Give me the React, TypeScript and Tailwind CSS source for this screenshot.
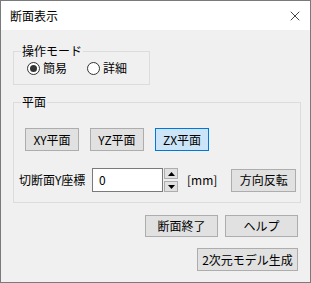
import { X } from "lucide-react";

const font = { fontFamily: '"Noto Sans CJK JP", "Noto Sans", sans-serif' };

function Btn({ label, className = "", active = false }: { label: string; className?: string; active?: boolean }) {
  return (
    <button
      className={
        "flex items-center justify-center border text-[12px] leading-none text-black " +
        (active ? "border-[#0078d7] bg-[#cce4f7] " : "border-[#adadad] bg-[#e1e1e1] ") +
        className
      }
    >
      {label}
    </button>
  );
}

function Radio({ label, checked }: { label: string; checked?: boolean }) {
  return (
    <label className="flex items-center gap-[3px]">
      <span className="flex h-[13px] w-[13px] items-center justify-center rounded-full border border-[#333333] bg-white">
        {checked && <span className="h-[7px] w-[7px] rounded-full bg-[#333333]" />}
      </span>
      <span className="text-[12px] leading-none">{label}</span>
    </label>
  );
}

function Group({ title, className, children }: { title: string; className: string; children: React.ReactNode }) {
  return (
    <div className={"relative border border-[#dcdcdc] " + className}>
      <span className="absolute -top-[9px] left-[7px] bg-[#f0f0f0] px-[1px] text-[12px] leading-[16px]">{title}</span>
      {children}
    </div>
  );
}

export default function App() {
  return (
    <div style={font} className="flex h-[283px] w-[311px] flex-col border border-[#7a7a7a] bg-[#f0f0f0] text-black">
      {/* title bar */}
      <div className="flex h-[29px] items-center justify-between bg-white pl-[9px] pr-[7px]">
        <span className="text-[12px]">断面表示</span>
        <X size={16} strokeWidth={1.1} className="text-black" />
      </div>

      <div className="flex flex-1 flex-col px-[12px] pt-[21px]">
        <Group title="操作モード" className="h-[34px] w-[137px]">
          <div className="flex h-full items-center gap-[20px] pl-[13px]">
            <Radio label="簡易" checked />
            <Radio label="詳細" />
          </div>
        </Group>

        <Group title="平面" className="mt-[17px] h-[101px] w-[288px]">
          <div className="flex flex-col pl-[11px] pt-[25px]">
            <div className="flex gap-[11px]">
              <Btn label="XY平面" className="h-[23px] w-[54px]" />
              <Btn label="YZ平面" className="h-[23px] w-[54px]" />
              <Btn label="ZX平面" className="h-[23px] w-[54px]" active />
            </div>
            <div className="mt-[17px] flex items-center">
              <span className="-ml-[6px] w-[73px] whitespace-nowrap text-[12px]">切断面Y座標</span>
              <div className="flex h-[24px] w-[71px] items-center border border-[#7a7a7a] bg-white pl-[6px] text-[12px]">0</div>
              <div className="ml-[1px] flex h-[24px] flex-col justify-between">
                <div className="flex h-[11px] w-[14px] items-center justify-center border border-[#adadad] bg-[#e1e1e1]">
                  <svg width="7" height="4" viewBox="0 0 7 4"><path d="M3.5 0L7 4H0z" fill="#000" /></svg>
                </div>
                <div className="flex h-[11px] w-[14px] items-center justify-center border border-[#adadad] bg-[#e1e1e1]">
                  <svg width="7" height="4" viewBox="0 0 7 4"><path d="M0 0h7L3.5 4z" fill="#000" /></svg>
                </div>
              </div>
              <span className="ml-[9px] text-[12px]">[mm]</span>
              <Btn label="方向反転" className="ml-[14px] h-[23px] w-[65px]" />
            </div>
          </div>
        </Group>

        <div className="mt-[12px] flex justify-end gap-[7px]">
          <Btn label="断面終了" className="h-[22px] w-[73px]" />
          <Btn label="ヘルプ" className="h-[22px] w-[73px]" />
        </div>
        <div className="mt-[11px] flex justify-end">
          <Btn label="2次元モデル生成" className="h-[23px] w-[101px]" />
        </div>
      </div>
    </div>
  );
}
